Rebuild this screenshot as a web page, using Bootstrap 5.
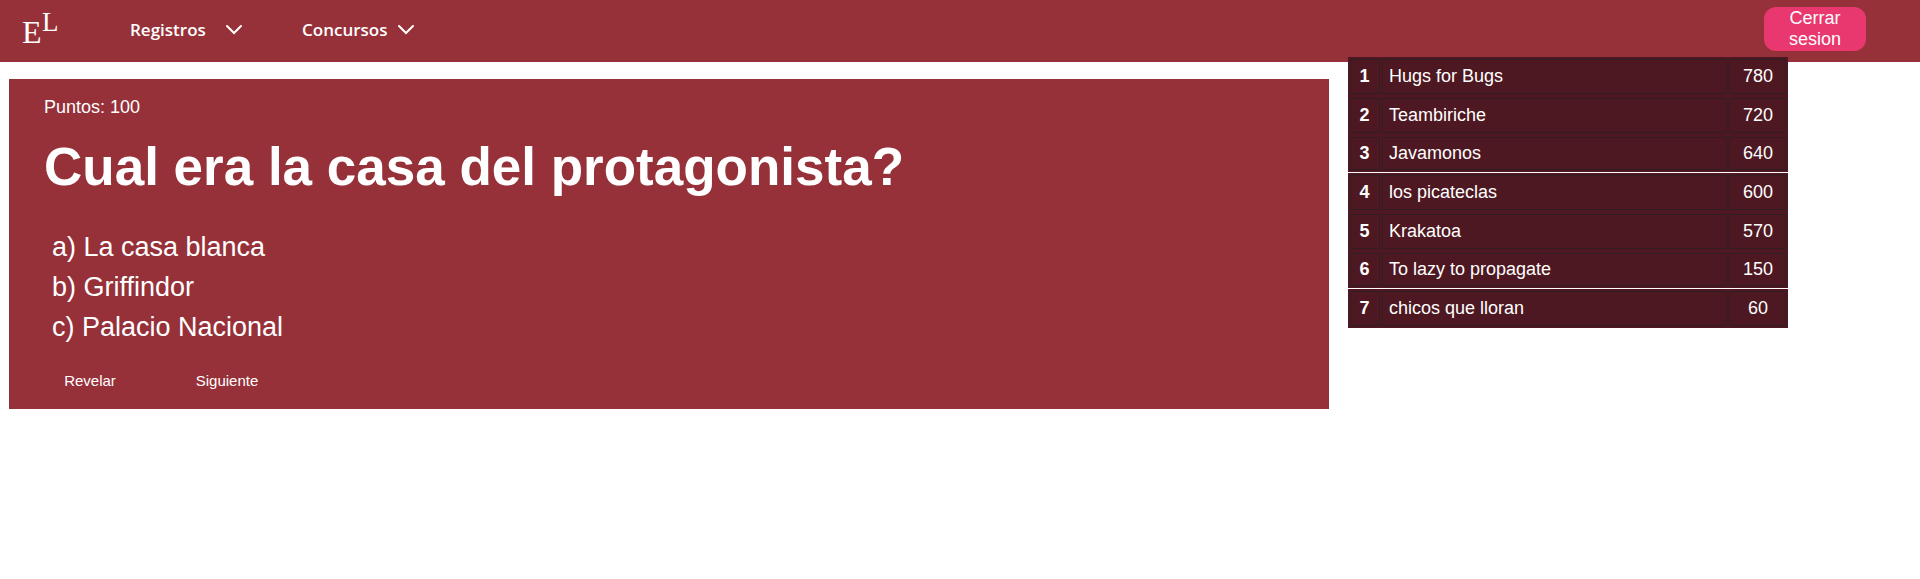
<!DOCTYPE html>
<html lang="es">
<head>
<meta charset="utf-8">
<meta name="viewport" content="width=device-width, initial-scale=1">
<title>Concurso</title>
<link href="https://cdn.jsdelivr.net/npm/bootstrap@5.3.0/dist/css/bootstrap.min.css" rel="stylesheet">
<style>
  body { font-family: "Liberation Sans", Arial, sans-serif; background: #fff; }
  .bar-main { background: #963139; height: 62px; padding: 0 54px 4px 18px; }
  .logo { width: 48px; height: 48px; }
  .menu-group { margin-left: 64px; margin-top: 2px; gap: 60px; }
  .menu-btn { font: 600 17px/24px "Open Sans", sans-serif; color: #fff; gap: 12px; }
  .menu-btn span { width: 84px; text-align: left; }
  .menu-btn svg { width: 16px; height: 12px; }
  .btn-exit { background: #e8386f; width: 102px; height: 44px; border-radius: 12px; font-size: 18px; line-height: 21px; }
  .content { display: grid; grid-template-columns: 3fr 1fr; padding: 0 132px 0 9px; gap: 19px; }
  .quiz { background: #963139; margin-top: 17px; padding: 16px 36px 16px 35px; }
  .points { font-size: 18px; line-height: 24px; }
  .question { font-size: 53px; line-height: 64px; font-weight: 700; margin: 16px 0 28px; }
  .answers { font-size: 27px; line-height: 40px; padding-left: 8px; }
  .quiz-actions { margin-top: 22px; gap: 45px; }
  .quiz-btn { font-size: 15px; line-height: 24px; width: 92px; }
  .ranking { margin-top: -5px; }
  .score-table { width: 100%; table-layout: fixed; border-collapse: separate; border-spacing: 0; color: #fff; font-size: 18px; line-height: 24px; }
  .score-table th, .score-table td { position: relative; height: 39px; padding: 0 8px 2px; background: #4d1821; }
  .score-table th { width: 33px; text-align: center; }
  .score-table td:last-child { width: 60px; text-align: center; }
  .score-table th::before, .score-table td::before { content: ""; position: absolute; inset: 2px 1px; border: 1px solid #321d20; }
  .score-table th::before { left: 2px; }
  .score-table td:last-child::before { right: 2px; }
  .score-table .group-end > * { height: 38px; border-bottom: 1px solid #fff; }
</style>
</head>
<body>
<nav class="bar-main d-flex align-items-center text-white">
  <a href="#" class="d-block" aria-label="Inicio">
    <svg class="logo d-block" viewBox="0 0 48 48" fill="#fff" font-family="Liberation Serif, serif"><text x="4" y="38" font-size="32">E</text><text x="24" y="26" font-size="27">L</text></svg>
  </a>
  <div class="menu-group d-flex">
    <button class="menu-btn btn border-0 p-0 d-flex align-items-center"><span>Registros</span>
      <svg viewBox="0 0 16 12" fill="none" stroke="#fff" stroke-width="2" stroke-linecap="round"><path d="M1 2 8 9 15 2"/></svg></button>
    <button class="menu-btn btn border-0 p-0 d-flex align-items-center"><span>Concursos</span>
      <svg viewBox="0 0 16 12" fill="none" stroke="#fff" stroke-width="2" stroke-linecap="round"><path d="M1 2 8 9 15 2"/></svg></button>
  </div>
  <button class="btn-exit btn text-white border-0 ms-auto px-3 py-0">Cerrar sesion</button>
</nav>
<main class="content align-items-start">
  <section class="quiz text-white">
    <p class="points mb-0">Puntos: 100</p>
    <h1 class="question">Cual era la casa del protagonista?</h1>
    <div class="answers">
      <div>a) La casa blanca</div>
      <div>b) Griffindor</div>
      <div>c) Palacio Nacional</div>
    </div>
    <div class="quiz-actions d-flex">
      <button class="quiz-btn btn text-white border-0 p-0">Revelar</button>
      <button class="quiz-btn btn text-white border-0 p-0">Siguiente</button>
    </div>
  </section>
  <aside class="ranking">
    <table class="score-table">
      <tbody>
        <tr><th scope="row">1</th><td>Hugs for Bugs</td><td>780</td></tr>
        <tr><th scope="row">2</th><td>Teambiriche</td><td>720</td></tr>
        <tr class="group-end"><th scope="row">3</th><td>Javamonos</td><td>640</td></tr>
        <tr><th scope="row">4</th><td>los picateclas</td><td>600</td></tr>
        <tr><th scope="row">5</th><td>Krakatoa</td><td>570</td></tr>
        <tr class="group-end"><th scope="row">6</th><td>To lazy to propagate</td><td>150</td></tr>
        <tr><th scope="row">7</th><td>chicos que lloran</td><td>60</td></tr>
      </tbody>
    </table>
  </aside>
</main>
<script src="https://cdn.jsdelivr.net/npm/bootstrap@5.3.0/dist/js/bootstrap.bundle.min.js"></script>
</body>
</html>
